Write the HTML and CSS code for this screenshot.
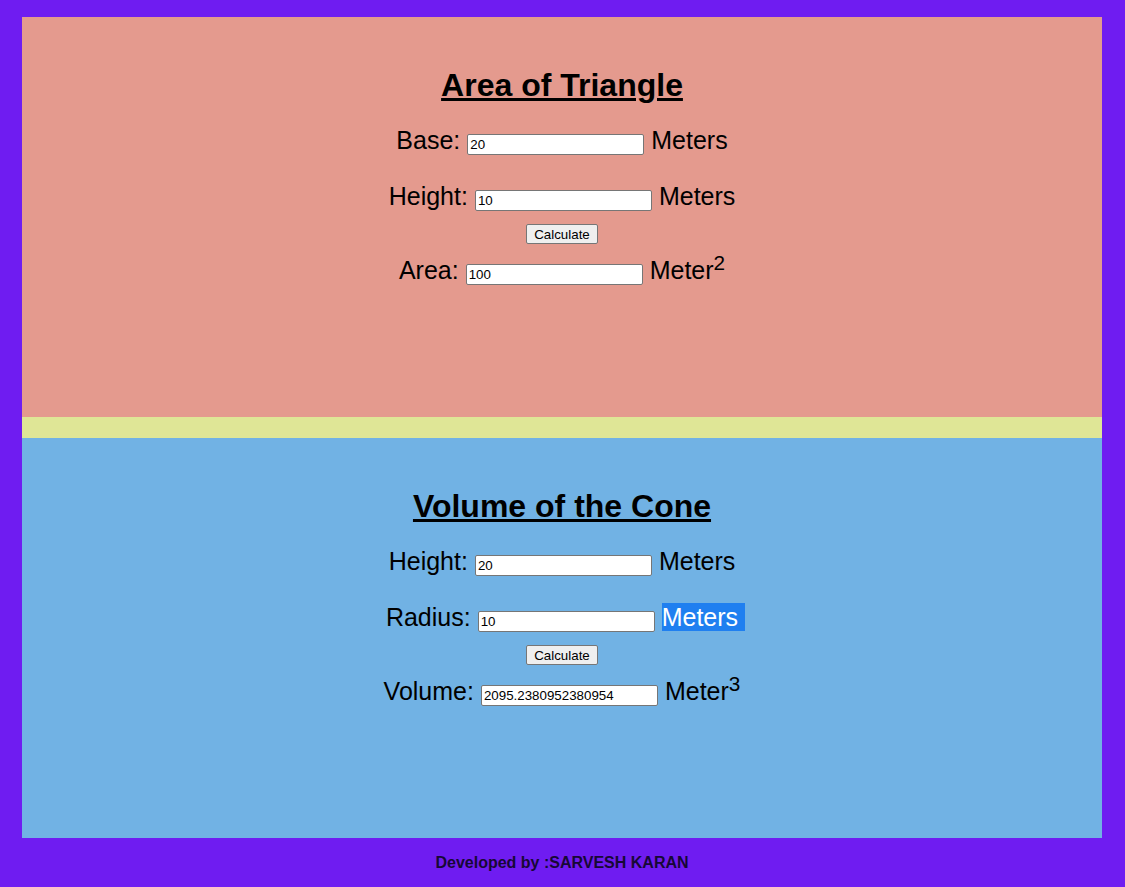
FILE: index.html
```html
<!DOCTYPE html>
<html lang="en">
<head>
<meta charset="utf-8">
<title>Area and Volume</title>
<link rel="stylesheet" href="styles.css">
</head>
<body>
<div class="page">
  <section class="card card-triangle">
    <h1 class="title">Area of Triangle</h1>
    <div class="row row-first">
      <span class="label">Base:</span>
      <input class="field" type="text" value="20">
      <span class="unit">Meters</span>
    </div>
    <div class="row row-second">
      <span class="label">Height:</span>
      <input class="field" type="text" value="10">
      <span class="unit">Meters</span>
    </div>
    <button class="calc" type="button">Calculate</button>
    <div class="row row-result">
      <span class="label">Area:</span>
      <input class="field" type="text" value="100">
      <span class="unit">Meter<sup class="pow">2</sup></span>
    </div>
  </section>
  <div class="divider"></div>
  <section class="card card-cone">
    <h1 class="title">Volume of the Cone</h1>
    <div class="row row-first">
      <span class="label">Height:</span>
      <input class="field" type="text" value="20">
      <span class="unit">Meters</span>
    </div>
    <div class="row row-second">
      <span class="label">Radius:</span>
      <input class="field" type="text" value="10">
      <span class="unit selected">Meters</span>
    </div>
    <button class="calc" type="button">Calculate</button>
    <div class="row row-result">
      <span class="label">Volume:</span>
      <input class="field" type="text" value="2095.2380952380954">
      <span class="unit">Meter<sup class="pow">3</sup></span>
    </div>
  </section>
  <footer class="footer">Developed by :SARVESH KARAN</footer>
</div>
</body>
</html>
```

FILE: styles.css
```css
html, body {
  margin: 0;
  padding: 0;
}

body {
  background: #6f1cf1;
  font-family: "Liberation Sans", Arial, sans-serif;
  color: #000;
}

.page {
  width: 1080px;
  margin-left: 22px;
  padding-top: 17px;
}

.card {
  height: 400px;
  box-sizing: border-box;
  padding-top: 50px;
}

.card-triangle {
  background: #e49a8e;
}

.card-cone {
  background: #71b2e4;
}

.divider {
  height: 21px;
  background: #dfe696;
}

.title {
  margin: 0;
  font-size: 32px;
  line-height: 37px;
  font-weight: bold;
  text-decoration: underline;
  text-align: center;
}

.row {
  display: flex;
  justify-content: center;
  align-items: baseline;
  gap: 7px;
  height: 30px;
  font-size: 25px;
  line-height: 30px;
}

.row-first {
  margin-top: 21px;
}

.row-second {
  margin-top: 26px;
}

.row-result {
  margin-top: 11px;
}

.field {
  box-sizing: border-box;
  width: 177px;
  height: 21px;
  padding: 1px 2px;
  border: 1px solid #767676;
  border-radius: 2px;
  background: #fff;
  font-family: "Liberation Sans", Arial, sans-serif;
  font-size: 13.33px;
  color: #000;
}

.unit {
  white-space: nowrap;
}

.selected {
  background: #1f7ff0;
  color: #fff;
  padding-right: 7px;
  margin-right: -7px;
  line-height: 28px;
}

.pow {
  font-size: 0.83em;
  line-height: 0;
}

.calc {
  display: block;
  margin: 13px auto 0;
  height: 20px;
  padding: 1px 7px;
  border: 1px solid #767676;
  border-radius: 2px;
  background: #efefef;
  font-family: "Liberation Sans", Arial, sans-serif;
  font-size: 13.33px;
  color: #000;
}

.footer {
  height: 49px;
  display: flex;
  align-items: center;
  justify-content: center;
  font-size: 16px;
  font-weight: bold;
  color: #170836;
}
```
